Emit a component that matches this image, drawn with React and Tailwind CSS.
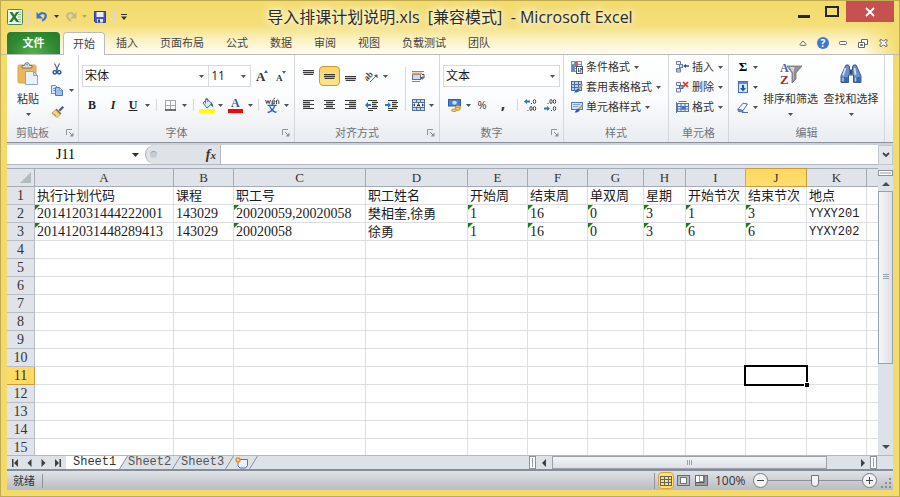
import React from "react";

const UI = "font-['Open_Sans','Noto_Sans_CJK_SC',sans-serif]";
const CELL = "font-['Liberation_Serif','Noto_Sans_CJK_SC',serif]";

/* ---------- small building blocks ---------- */

function Svg({ w = 14, h = 14, children, vb }) {
  return (
    <svg width={w} height={h} viewBox={vb || `0 0 ${w} ${h}`} className="block shrink-0 overflow-visible" aria-hidden="true">
      {children}
    </svg>
  );
}

function Caret({ className = "text-[#505050]" }) {
  return (
    <svg width="5" height="3" viewBox="0 0 5 3" className={`block shrink-0 ${className}`} aria-hidden="true">
      <path d="M0 0h5L2.5 3z" fill="currentColor" />
    </svg>
  );
}

function Btn({ label, className = "", children }) {
  return (
    <button type="button" aria-label={label} className={`flex shrink-0 items-center justify-center ${className}`}>
      {children}
    </button>
  );
}

function Sep({ className = "h-3 w-2" }) {
  return (
    <span className={`flex shrink-0 justify-center ${className}`}>
      <span className="h-full w-px bg-[#d4d7db]" />
    </span>
  );
}

function Group({ title, width, launcher, children }) {
  return (
    <section aria-label={title} className={`flex shrink-0 flex-col border-r border-[#d3d7dc] ${width}`}>
      <div className="flex h-[70px] items-start">{children}</div>
      <div className="flex h-[18px] items-center pr-1">
        <span className={`flex-1 text-center text-[#6d7480] ${launcher ? "pr-2" : "pl-1"}`}>{title}</span>
        {launcher && (
          <Btn label={`${title}选项`} className="h-2 w-2">
            <Svg w={8} h={8}>
              <path d="M.5 6V.5H6" fill="none" stroke="#8d949e" />
              <path d="M3 3l3 3" stroke="#7c838d" />
              <path d="M7.500 3.500v4h-4z" fill="#8d949e" />
            </Svg>
          </Btn>
        )}
      </div>
    </section>
  );
}

function Combo({ label, value, className }) {
  return (
    <label className={`flex h-[22px] items-center border border-[#d6dade] bg-white pr-1 ${className}`}>
      <select aria-label={label} defaultValue={value} className="h-full min-w-0 flex-1 appearance-none bg-transparent pl-[2px] text-[12px] text-[#1a1a1a] outline-none">
        <option>{value}</option>
      </select>
      <Caret />
    </label>
  );
}

/* ---------- icons ---------- */

const ExcelIcon = () => (
  <Svg w={16} h={16}>
    <rect x=".5" y=".5" width="15" height="15" rx="1" fill="#eef6ea" stroke="#4b8a4f" />
    <path d="M11 3h3M11 5.500h3M11 8h3M11 10.500h3M11 13h3" stroke="#8cb98d" />
    <path d="M2.500 3h3l1.700 3L9.300 3H12L8.600 8l3.700 5H9.200L7.100 9.900 4.900 13H2l3.700-5z" fill="#1f7d34" />
  </Svg>
);

const UndoIcon = ({ color }) => (
  <Svg w={12} h={11}>
    <path d="M3 4C5.500 1.200 9.800 1.800 9.800 5c0 2-1.300 3.300-3.600 4.800" fill="none" stroke={color} strokeWidth="2.200" />
    <path d="M.5.8v6.700h6.500z" fill={color} />
  </Svg>
);

const SaveIcon = () => (
  <Svg w={12} h={12}>
    <path d="M.5.5h11v11h-10l-1-1z" fill="#4d56c0" stroke="#303a92" />
    <rect x="2.500" y="1" width="7" height="5" fill="#e9edf8" />
    <rect x="3" y="8" width="6" height="3.500" fill="#dfe3ee" />
    <rect x="4" y="8.500" width="2" height="3" fill="#303a92" />
  </Svg>
);

const PasteIcon = () => (
  <Svg w={22} h={24}>
    <rect x="1" y="3" width="18" height="18" rx="1.500" fill="#eab55b" stroke="#dba549" />
    <path d="M5 6V3.500h2.500C7.500 1.500 8.500.8 10 .8s2.500.7 2.500 2.700H15V6z" fill="#dde1e6" stroke="#6d737c" />
    <circle cx="10" cy="2.800" r=".8" fill="#6d737c" />
    <path d="M8.500 9.500h8l4 4v9h-12z" fill="#eaf1fb" stroke="#93a5c2" />
    <path d="M16.500 9.500v4h4z" fill="#cfdcf0" stroke="#93a5c2" />
  </Svg>
);

const CutIcon = () => (
  <Svg w={10} h={12}>
    <path d="M2.500.5L6.200 8M7.500.5L3.800 8" stroke="#5b6f93" strokeWidth="1.300" />
    <circle cx="2.800" cy="9.300" r="1.700" fill="none" stroke="#2451a8" strokeWidth="1.400" />
    <circle cx="7.200" cy="9.300" r="1.700" fill="none" stroke="#2451a8" strokeWidth="1.400" />
  </Svg>
);

const CopyIcon = () => (
  <Svg w={12} h={11}>
    <path d="M.5.5h4l2 2v6h-6z" fill="#dce9fb" stroke="#6b90cc" />
    <path d="M2 3.500h3M2 5.500h3" stroke="#6b90cc" />
    <path d="M4.500 2.500h4l3 3v5h-7z" fill="#9dc0f0" stroke="#4a76bd" />
    <path d="M8.500 2.500v3h3z" fill="#e8f1fd" stroke="#4a76bd" strokeWidth=".6" />
  </Svg>
);

const BrushIcon = () => (
  <Svg w={13} h={12}>
    <path d="M12.300.8L8.300 4.800" stroke="#57508f" strokeWidth="2.200" />
    <path d="M5.500 2.500l5 5-1.500 1-4.700-4.500z" fill="#6d6d74" />
    <path d="M4.500 3.800l4.700 4.700L6 11.500.8 7.200z" fill="#f3d778" stroke="#a88a34" strokeWidth=".7" />
    <path d="M2.500 7.500L5 9.800" stroke="#a88a34" strokeWidth=".8" />
  </Svg>
);

const GrowFont = ({ small }) => (
  <Svg w={13} h={14}>
    <text x="0" y="12" fontFamily="Liberation Serif, serif" fontWeight="bold" fontSize={small ? 9 : 13} fill="#333">A</text>
    {small ? <path d="M6 2h4L8 5z" fill="#3561b8" /> : <path d="M8 4h4L10 1z" fill="#3561b8" />}
  </Svg>
);

const BorderIcon = () => (
  <Svg w={11} h={11}>
    <path d="M.5 0v10M5.500 0v10M10.500 0v10M0 .5h11M0 5.500h11" stroke="#a4a8ae" />
    <path d="M0 10h11" stroke="#444" strokeWidth="1.500" />
  </Svg>
);

const FillIcon = () => (
  <Svg w={16} h={14}>
    <path d="M4 5l4-4 5 4.500-5 4.500z" fill="#dce7f7" stroke="#4a6ea9" />
    <path d="M6.500 5.500V1.500c0-1.500 2.300-1.500 2.300 0V4" fill="none" stroke="#5d6c86" />
    <path d="M12 4.500c2 1 2.500 3 2 5-.6-1.300-1.300-2-2.500-2.500z" fill="#2c5dab" />
    <rect y="11" width="16" height="4" rx="1" fill="#ffff00" />
  </Svg>
);

const FontColorIcon = () => (
  <Svg w={15} h={14}>
    <text x="3" y="9" fontFamily="Liberation Serif, serif" fontWeight="bold" fontSize="12" fill="#3a5a97">A</text>
    <rect y="11" width="15" height="4" fill="#fb0007" />
  </Svg>
);

const PhoneticIcon = () => (
  <Svg w={14} h={14}>
    <path d="M.5 2l1.300 3.500L3 2.500l1.200 3L5.500 2M7 4h3c0-2.500-3-2.500-3 0 0 2 2.200 2 3 1.200M11.500 6V2.500c1.500-1 2.300-.3 2.300.8V6M8.500 1L10 0" fill="none" stroke="#444" />
    <text x="2" y="14" fontFamily="Noto Sans CJK SC, sans-serif" fontWeight="bold" fontSize="10" fill="#2f5fc0">文</text>
  </Svg>
);

const VAlign = ({ rows }) => (
  <Svg w={12} h={12}>
    {rows.map((y, i) => (
      <rect key={y} x={i === 2 ? 1 : 0} y={y} width={i === 2 ? 9 : 11} height="1" fill="#3b3b3b" />
    ))}
    <rect x="0" y={rows[0]} width="11" height="5" fill="#3b3b3b" opacity=".3" />
  </Svg>
);

const HAlign = ({ kind }) => {
  const x = { left: 0, center: 2, right: 4 }[kind];
  return (
    <Svg w={11} h={10}>
      {[0, 2, 4, 6, 8].map((y, i) => (
        <rect key={y} x={i % 2 ? x : 0} y={y} width={i % 2 ? 7 : 11} height="1" fill="#3b3b3b" />
      ))}
      <rect x={x} y="0" width="7" height="9" fill="#3b3b3b" opacity=".3" />
    </Svg>
  );
};

const OrientIcon = () => (
  <Svg w={13} h={13}>
    <text x="0" y="9" fontFamily="Liberation Serif, serif" fontWeight="bold" fontSize="9" fill="#444" transform="rotate(-45 4 8)">ab</text>
    <path d="M5 12l6-6" stroke="#666" />
    <path d="M12.500 4.500v3.800L8.900 5z" fill="#555" />
  </Svg>
);

const IndentIcon = ({ out }) => (
  <Svg w={13} h={11}>
    <path d="M3 .5h9M7 2.500h6M7 4.500h4M7 6.500h6M3 8.500h9M3 10.500h5" stroke="#3b3b3b" />
    <path d="M7 1h5v8H7z" fill="#3b3b3b" opacity=".25" />
    {out ? <path d="M0 5l3-3v2h3v2H3v2z" fill="#2f6fd0" /> : <path d="M6 5L3 2v2H0v2h3v2z" fill="#2f6fd0" />}
  </Svg>
);

const WrapIcon = () => (
  <Svg w={13} h={13}>
    <path d="M0 1.500h12M0 11.500h8" stroke="#7e8a9c" />
    <rect x=".5" y="4.500" width="8" height="5" fill="#cfdcf0" stroke="#5d7096" />
    <rect x="0" y="2.500" width="10" height="2" fill="#f0a26b" />
    <path d="M10 4.500h2v3.500h-2.500" fill="none" stroke="#444" />
    <path d="M10.500 6L8.500 8l2 2z" fill="#444" />
  </Svg>
);

const MergeIcon = () => (
  <Svg w={13} h={12}>
    <rect x=".5" y=".5" width="12" height="11" fill="#c3d6f2" stroke="#56709d" />
    <path d="M0 3.500h13M0 8.500h13M4.500 0v3M8.500 0v3M4.500 9v3M8.500 9v3" stroke="#56709d" />
    <rect x="1" y="4" width="11" height="4" fill="#f1f6fd" />
    <path d="M1 6l2-1.800v3.600zM12 6l-2-1.800v3.600z" fill="#2a3d63" />
    <path d="M5 7.500L6.500 4.500 8 7.500M5.500 6.500h2" fill="none" stroke="#222" strokeWidth=".9" />
  </Svg>
);

const MoneyIcon = () => (
  <Svg w={13} h={13}>
    <rect x=".5" y=".5" width="12" height="6.500" fill="#4c7fc9" stroke="#2f5ca4" />
    <ellipse cx="6.500" cy="3.800" rx="2.300" ry="2" fill="#c9dcf6" />
    <ellipse cx="10" cy="8" rx="2.800" ry="1.500" fill="#f4cf60" stroke="#b08420" strokeWidth=".7" />
    <ellipse cx="9.500" cy="10" rx="2.800" ry="1.500" fill="#f4cf60" stroke="#b08420" strokeWidth=".7" />
    <ellipse cx="6" cy="11.300" rx="2.800" ry="1.300" fill="#f4cf60" stroke="#b08420" strokeWidth=".7" />
  </Svg>
);

const Zero = ({ x, y }) => <ellipse cx={x} cy={y} rx="1.200" ry="2" fill="none" stroke="#444" strokeWidth="1" />;

const DecimalIcon = ({ more }) => {
  const one = more ? 2.500 : 9.500;
  const two = more ? 9.500 : 2.500;
  return (
    <Svg w={13} h={12}>
      <Zero x="10.500" y={one} />
      <rect x="7" y={one + 1.500} width="1" height="1" fill="#444" />
      <Zero x="7" y={two} />
      <Zero x="10.500" y={two} />
      <rect x="3.500" y={two + 1.500} width="1" height="1" fill="#444" />
      {more ? <path d="M0 2.500L3 0v1.500h3v2H3V5z" fill="#2f6fd0" /> : <path d="M6 9.500L3 7v1.500H0v2h3V12z" fill="#2f6fd0" />}
    </Svg>
  );
};

const CondIcon = () => (
  <Svg w={12} h={13}>
    <rect x=".5" y=".5" width="10" height="10" fill="#e4ecf8" stroke="#7d93b8" />
    <path d="M3.500 0v11M0 3.500h11M0 7.500h6" stroke="#7d93b8" />
    <rect x="4" y="1" width="3" height="5" fill="#e2574c" />
    <rect x="1" y="4" width="2" height="6" fill="#5585cf" />
    <rect x="5.500" y="5.500" width="6" height="7" fill="#fff" stroke="#4b5a74" />
    <path d="M7.500 7v4M9 7.500h1.500v1.500H9v2h1.500" fill="none" stroke="#333" strokeWidth=".8" />
  </Svg>
);

const TableFmtIcon = () => (
  <Svg w={12} h={12}>
    <rect x=".5" y=".5" width="10" height="9" fill="#b9d0f2" stroke="#4a6da8" />
    <path d="M0 3.500h11M0 6.500h11M3.500 0v10M7.500 0v10" stroke="#4a6da8" />
    <path d="M11.500 3.500l-5 5.500" stroke="#ce9a3b" strokeWidth="1.800" />
    <path d="M7.500 7.500c-2 .5-2.500 2-4.500 4 2.500.3 5-.5 5.800-2.500z" fill="#2f62b5" />
  </Svg>
);

const CellStyleIcon = () => (
  <Svg w={12} h={12}>
    <rect x=".5" y="1.500" width="11" height="7" fill="#cfe0f8" stroke="#4f7abf" />
    <path d="M2 3.500h7M2 5.500h5" stroke="#85a6da" />
    <path d="M11.500 4L7 9" stroke="#ce9a3b" strokeWidth="1.800" />
    <path d="M7.500 7.500c-2 .5-2.500 2-4 4 2.500.3 4.500-.5 5.300-2.500z" fill="#2f62b5" />
  </Svg>
);

const InsertIcon = () => (
  <Svg w={13} h={12}>
    <path d="M.5.500h4v3h-4zM.5 7.500h4v3.500h-4zM.5 9h4" fill="#e6eefa" stroke="#6c7d99" />
    <rect x="3.500" y="3.500" width="3" height="3" fill="#cfe0f8" stroke="#6c7d99" />
    <path d="M7 5l3-2v1.300h3v1.500h-3V7z" fill="#2c4f8f" />
  </Svg>
);

const DeleteIcon = () => (
  <Svg w={13} h={12}>
    <path d="M.5 1.500h4v3h-4zM.5 7.500h4v3.500h-4z" fill="#e6eefa" stroke="#6c7d99" />
    <rect x="3.500" y="4.500" width="3.500" height="3" fill="#8fb2e6" stroke="#4f6da0" />
    <path d="M7 1l5 5M12 1L7 6" stroke="#e8291c" strokeWidth="1.700" />
  </Svg>
);

const FormatIcon = () => (
  <Svg w={13} h={12}>
    <rect x="1.500" y="2.500" width="11" height="8" fill="#dce8f9" stroke="#5a77a8" />
    <path d="M1 5.500h12M1 8h12M5 2v9M9 2v9M2.500.5h8M.5 1v11" stroke="#5a77a8" />
    <rect x="5.500" y="5.500" width="4" height="3" fill="#3d74c9" />
  </Svg>
);

const FillDownIcon = () => (
  <Svg w={10} h={12}>
    <rect x=".5" y=".5" width="9" height="11" fill="#d9e7fb" stroke="#466fb4" />
    <rect x="1" y="1" width="8" height="2" fill="#5c8bd8" />
    <path d="M4 4h2v3h2L5 10.500 2 7h2z" fill="#1f55b5" />
  </Svg>
);

const EraserIcon = () => (
  <Svg w={12} h={11}>
    <path d="M.8 7.500L6 1.200 10.500 2 6 8.500z" fill="#f3f6fc" stroke="#5a6f98" />
    <path d="M.8 7.500L6 8.500v1.300L1.500 9.500z" fill="#8aa4d3" stroke="#5a6f98" />
    <path d="M5 10.500h6" stroke="#5a6f98" />
  </Svg>
);

const SortIcon = () => (
  <Svg w={22} h={22}>
    <text x="0" y="9" fontFamily="Liberation Serif, serif" fontWeight="bold" fontSize="12" fill="#3d68ad">A</text>
    <text x="0" y="21" fontFamily="Liberation Serif, serif" fontWeight="bold" fontSize="13" fill="#9a3434">Z</text>
    <path d="M7 3h15l-6 7v6l-4 4V10z" fill="#8f9296" stroke="#6f7276" strokeWidth=".8" />
    <path d="M9.500 4h5l-1 5.500v7l-.5.500V9.500z" fill="#d2d4d6" />
  </Svg>
);

const FindIcon = () => (
  <Svg w={22} h={20}>
    <path d="M5 3l1-2h2.500l1 2v3h3V3l1-2H16l1 2 4 9v6.500h-7.500V11h-5v7.500H1V12z" fill="#6c8fc9" stroke="#3a5990" />
    <path d="M5.500 4L3 11.500M14.500 4l1 7" stroke="#d0def5" strokeWidth="1.800" />
    <rect x="1.500" y="13" width="6.500" height="5" rx="1" fill="#3f66a8" />
    <rect x="14" y="13" width="6.500" height="5" rx="1" fill="#3f66a8" />
    <rect x="9.500" y="6" width="3" height="4" fill="#2f4d85" />
    <path d="M3 13.500v4M15.500 13.500v4" stroke="#b3caef" strokeWidth="1.500" />
  </Svg>
);

/* ---------- title bar and ribbon tabs ---------- */

function TitleBar() {
  return (
    <header className="relative flex h-[31px] shrink-0 items-start pl-[6px]">
      <div className="flex h-[31px] items-center">
        <span className="mr-[3px]"><ExcelIcon /></span>
        <Sep className="h-[14px] w-1" />
        <Btn label="撤消" className="ml-1 h-4 w-4"><UndoIcon color="#3c73cf" /></Btn>
        <Btn label="撤消列表" className="ml-[2px] h-4 w-2"><Caret className="text-[#333]" /></Btn>
        <Btn label="恢复" className="ml-[3px] h-4 w-4 -scale-x-100"><UndoIcon color="#c3b98e" /></Btn>
        <Btn label="恢复列表" className="ml-px h-4 w-2"><Caret className="text-[#b5a567]" /></Btn>
        <Btn label="保存" className="ml-1 h-4 w-4"><SaveIcon /></Btn>
        <Sep className="ml-1 h-[14px] w-1" />
        <Btn label="自定义快速访问工具栏" className="ml-1 h-4 w-2">
          <Svg w={6} h={6}><path d="M0 .5h6" stroke="#333" /><path d="M0 2.500h6L3 6z" fill="#333" /></Svg>
        </Btn>
      </div>
      <h1 className="pointer-events-none absolute inset-0 flex items-center justify-center">
        <span className="whitespace-pre text-[16px] leading-[28px] text-[#2b2b2b] [text-shadow:0_0_6px_#fffbe6,0_0_10px_#fffbe6,0_0_14px_#fffbe6]">导入排课计划说明.xls  [兼容模式]  - Microsoft Excel</span>
      </h1>
      <div className="ml-auto flex h-[21px] items-center pr-[5px]">
        <Btn label="最小化" className="h-full w-[28px] items-end pb-1"><span className="mt-2 h-[3px] w-3 bg-[#262626]" /></Btn>
        <Btn label="最大化" className="h-full w-[28px]"><span className="h-[11px] w-[14px] border-2 border-[#262626]" /></Btn>
        <Btn label="关闭" className="h-full w-[48px] bg-[#c75050]">
          <Svg w={10} h={10}><path d="M1 1l8 8M9 1L1 9" stroke="#fff" strokeWidth="1.800" /></Svg>
        </Btn>
      </div>
    </header>
  );
}

const TABS = ["插入", "页面布局", "公式", "数据", "审阅", "视图", "负载测试", "团队"];

function RibbonTabs() {
  return (
    <nav className="relative flex h-[23px] shrink-0 items-stretch border-b border-[#b9bdc2] px-[6px]">
      <button type="button" className="mr-[3px] w-[53px] rounded-t-sm bg-[radial-gradient(ellipse_at_bottom,#5cb04a,#2f8a33_60%,#237a2c)] font-bold text-white">文件</button>
      <button type="button" className="-mb-px w-[42px] rounded-t-sm border border-b-0 border-[#b9bdc2] bg-white text-[#444]">开始</button>
      {TABS.map((t) => (
        <button type="button" key={t} className="px-[11px] text-[#444]">{t}</button>
      ))}
      <div className="ml-auto flex items-center">
        <Btn label="折叠功能区" className="w-5"><Svg w={8} h={6}><path d="M.8 4.500L4 1l3.200 3.500-1 .8h-4.400z" fill="#fff" stroke="#555" strokeWidth=".9" /></Svg></Btn>
        <Btn label="帮助" className="w-5">
          <span className="flex h-3 w-3 items-center justify-center rounded-full bg-[#3f78cf] text-[10px] font-bold leading-3 text-white">?</span>
        </Btn>
        <Btn label="最小化工作簿" className="w-5"><Svg w={8} h={4}><rect x=".5" y=".5" width="7" height="3" rx="1" fill="#fff" stroke="#666" /></Svg></Btn>
        <Btn label="还原工作簿" className="w-5"><Svg w={10} h={9}><path d="M3.500.5h6v5h-6z" fill="#fff" stroke="#666" /><path d="M.5 3.500h6v5h-6z" fill="#fff" stroke="#666" /><path d="M2.500 5.500h2v1h-2z" stroke="#666" fill="none" /></Svg></Btn>
        <Btn label="关闭工作簿" className="w-5"><Svg w={9} h={8}><path d="M1 .8h2l1.500 1.500L6 .8h2v1.500L6.300 4 8 5.700v1.500H6L4.500 5.700 3 7.200H1V5.700L2.700 4 1 2.300z" fill="#fff" stroke="#555" strokeWidth=".9" /></Svg></Btn>
      </div>
    </nav>
  );
}

/* ---------- ribbon ---------- */

function ListBtn({ icon, text }) {
  return (
    <button type="button" className="flex h-5 items-center whitespace-nowrap text-[#333]">
      <span className="mr-[3px] flex w-[13px] justify-center">{icon}</span>
      {text}
      <span className="ml-1"><Caret /></span>
    </button>
  );
}

function BigBtn({ icon, text, className = "" }) {
  return (
    <button type="button" className={`flex shrink-0 flex-col items-center whitespace-nowrap text-[#333] ${className}`}>
      <span className="flex h-[26px] items-center">{icon}</span>
      <span className="mt-[2px] h-5 leading-5">{text}</span>
      <span className="mt-1"><Caret /></span>
    </button>
  );
}

function Drop({ label, width = "w-2" }) {
  return <Btn label={label} className={`h-5 ${width}`}><Caret /></Btn>;
}

function Ribbon() {
  return (
    <div className="flex h-[88px] shrink-0 overflow-hidden border-b border-[#8b9099] bg-[linear-gradient(#ffffff,#fbfcfd_50%,#e9ecf0)]">
      <Group title="剪贴板" width="w-[72px]" launcher>
        <BigBtn icon={<PasteIcon />} text="粘贴" className="w-[42px] pt-[6px]" />
        <div className="flex flex-col pt-1">
          <Btn label="剪切" className="h-5 w-4"><CutIcon /></Btn>
          <div className="flex items-center"><Btn label="复制" className="h-[22px] w-4"><CopyIcon /></Btn><Drop label="复制选项" width="w-3" /></div>
          <Btn label="格式刷" className="h-[22px] w-4"><BrushIcon /></Btn>
        </div>
      </Group>

      <Group title="字体" width="w-[216px]" launcher>
        <div className="flex w-full flex-col gap-2 px-[3px] pt-[10px]">
          <div className="flex items-center">
            <Combo label="字体" value="宋体" className="w-[128px]" />
            <Combo label="字号" value="11" className="-ml-px w-[43px]" />
            <Btn label="增大字号" className="h-5 w-[22px]"><GrowFont /></Btn>
            <Btn label="减小字号" className="h-5 w-[18px]"><GrowFont small /></Btn>
          </div>
          <div className="flex items-center font-['Liberation_Serif'] text-[12px] text-[#222]">
            <Btn label="加粗" className="h-5 w-5 font-bold">B</Btn>
            <Btn label="倾斜" className="h-5 w-[22px] font-bold italic">I</Btn>
            <Btn label="下划线" className="h-5 w-[18px] font-bold underline">U</Btn>
            <Drop label="下划线选项" width="w-[10px]" />
            <Sep />
            <Btn label="边框" className="h-5 w-5"><BorderIcon /></Btn>
            <Drop label="边框选项" />
            <Sep className="h-3 w-[10px]" />
            <Btn label="填充颜色" className="h-5 w-[18px]"><FillIcon /></Btn>
            <Drop label="填充颜色选项" />
            <Btn label="字体颜色" className="h-5 w-[22px]"><FontColorIcon /></Btn>
            <Drop label="字体颜色选项" />
            <Sep />
            <Btn label="拼音" className="h-5 w-5"><PhoneticIcon /></Btn>
            <Drop label="拼音选项" />
          </div>
        </div>
      </Group>

      <Group title="对齐方式" width="w-[145px]" launcher>
        <div className="flex flex-col gap-2 pl-[3px] pt-[10px]">
          <div className="flex h-[22px] items-center">
            <Btn label="顶端对齐" className="h-5 w-[21px]"><VAlign rows={[0, 2, 4]} /></Btn>
            <Btn label="垂直居中" className="h-5 w-[21px] rounded-sm border border-[#c99b3c] bg-[linear-gradient(#fbd46c,#fde68a)]"><VAlign rows={[4, 6, 8]} /></Btn>
            <Btn label="底端对齐" className="h-5 w-[21px]"><VAlign rows={[6, 8, 10]} /></Btn>
            <Btn label="方向" className="h-5 w-5"><OrientIcon /></Btn>
            <Drop label="方向选项" />
          </div>
          <div className="flex items-center">
            <Btn label="左对齐" className="h-5 w-[21px]"><HAlign kind="left" /></Btn>
            <Btn label="居中" className="h-5 w-[21px]"><HAlign kind="center" /></Btn>
            <Btn label="右对齐" className="h-5 w-[21px]"><HAlign kind="right" /></Btn>
            <Btn label="减少缩进量" className="h-5 w-5"><IndentIcon out /></Btn>
            <Btn label="增加缩进量" className="h-5 w-5"><IndentIcon /></Btn>
          </div>
        </div>
        <Sep className="mt-3 h-[44px] w-2" />
        <div className="flex flex-col gap-2 pt-[10px]">
          <div className="flex h-[22px] items-center"><Btn label="自动换行" className="h-5 w-[18px]"><WrapIcon /></Btn></div>
          <div className="flex items-center"><Btn label="合并后居中" className="h-5 w-[18px]"><MergeIcon /></Btn><Drop label="合并选项" /></div>
        </div>
      </Group>

      <Group title="数字" width="w-[124px]" launcher>
        <div className="flex w-full flex-col gap-2 pl-[3px] pt-[10px]">
          <Combo label="数字格式" value="文本" className="w-[117px]" />
          <div className="flex items-center text-[#333]">
            <Btn label="会计数字格式" className="h-5 w-[22px]"><MoneyIcon /></Btn>
            <Drop label="会计选项" width="w-[6px]" />
            <Btn label="百分比样式" className="h-5 w-[22px]">%</Btn>
            <Btn label="千位分隔样式" className="h-5 w-5 pb-1 text-[16px] font-bold">,</Btn>
            <Sep />
            <Btn label="增加小数位数" className="h-5 w-[18px]"><DecimalIcon more /></Btn>
            <Btn label="减少小数位数" className="h-5 w-[22px]"><DecimalIcon /></Btn>
          </div>
        </div>
      </Group>

      <Group title="样式" width="w-[105px]">
        <div className="flex flex-col pl-[6px] pt-[2px]">
          <ListBtn icon={<CondIcon />} text="条件格式" />
          <ListBtn icon={<TableFmtIcon />} text="套用表格格式" />
          <ListBtn icon={<CellStyleIcon />} text="单元格样式" />
        </div>
      </Group>

      <Group title="单元格" width="w-[60px]">
        <div className="flex flex-col pl-[7px] pt-[2px]">
          <ListBtn icon={<InsertIcon />} text="插入" />
          <ListBtn icon={<DeleteIcon />} text="删除" />
          <ListBtn icon={<FormatIcon />} text="格式" />
        </div>
      </Group>

      <Group title="编辑" width="w-[156px]">
        <div className="flex flex-col pl-[6px] pt-[2px]">
          <div className="flex"><Btn label="自动求和" className="h-5 w-4 font-['Liberation_Serif'] text-[13px] font-bold">Σ</Btn><Drop label="求和选项" width="w-[9px]" /></div>
          <div className="flex"><Btn label="填充" className="h-5 w-4"><FillDownIcon /></Btn><Drop label="填充选项" width="w-[9px]" /></div>
          <div className="flex"><Btn label="清除" className="h-5 w-4"><EraserIcon /></Btn><Drop label="清除选项" width="w-[9px]" /></div>
        </div>
        <BigBtn icon={<SortIcon />} text="排序和筛选" className="w-[61px] pt-[6px]" />
        <BigBtn icon={<FindIcon />} text="查找和选择" className="w-[60px] pt-[6px]" />
      </Group>
    </div>
  );
}

/* ---------- formula bar ---------- */

function FormulaBar() {
  return (
    <div className={`flex h-[25px] shrink-0 border-y-2 border-b-[3px] border-b-[#dfe3e9] border-t-[#cdd1d8] bg-white ${CELL}`}>
      <div className="flex w-[138px] items-center border-b border-[#b4b9c1] pr-[6px]">
        <input aria-label="名称框" defaultValue="J11" className="min-w-0 flex-1 bg-transparent pr-2 text-center text-[14px] outline-none" />
        <svg width="7" height="4" viewBox="0 0 7 4" aria-hidden="true"><path d="M0 0h7L3.500 4z" fill="#333" /></svg>
      </div>
      <div className="w-[76px] border-b border-r border-[#b4b9c1]">
        <div className="flex h-full items-center justify-between rounded-l-full border-l border-[#a9aeb7] bg-[#dfe2e7] pl-1 pr-1">
          <span className="h-[7px] w-[7px] rounded-full border-t border-[#9da2aa] bg-[#c8ccd2]" />
          <button type="button" aria-label="插入函数" className="font-['Liberation_Serif'] text-[14px] font-bold italic leading-4 text-[#333]">f<span className="text-[11px]">x</span></button>
        </div>
      </div>
      <input aria-label="编辑栏" className="min-w-0 flex-1 border-b border-[#b4b9c1] bg-white px-1 text-[13px] outline-none" />
      <Btn label="展开编辑栏" className="w-[15px] border border-[#c2c7ce] bg-[#e4e7ec]">
        <Svg w={8} h={6}><path d="M1 1l3 3 3-3" fill="none" stroke="#444" strokeWidth="1.800" /></Svg>
      </Btn>
    </div>
  );
}

/* ---------- worksheet ---------- */

const COLS = ["A", "B", "C", "D", "E", "F", "G", "H", "I", "J", "K"];
const ROWS = [
  ["执行计划代码", "课程", "职工号", "职工姓名", "开始周", "结束周", "单双周", "星期", "开始节次", "结束节次", "地点"],
  ["201412031444222001", "143029", "20020059,20020058", "樊相奎,徐勇", "1", "16", "0", "3", "1", "3", "YYXY201"],
  ["201412031448289413", "143029", "20020058", "徐勇", "1", "16", "0", "3", "6", "6", "YYXY202"],
];
const TEXT_NUMBERS = new Set(["A", "C", "E", "F", "G", "H", "I", "J"]);
const ROW_COUNT = 15;

function Cell({ row, col, value }) {
  const marked = value && row > 1 && TEXT_NUMBERS.has(col);
  const selected = row === 11 && col === "J";
  return (
    <td className="relative h-[18px] border-b border-r border-[#dcdee1] p-0">
      {marked && <span className="absolute left-0 top-0 h-[5px] w-[5px] bg-[#138013] [clip-path:polygon(0_0,100%_0,0_100%)]" />}
      {value && (
        <div className={`h-[17px] whitespace-nowrap pl-[2px] leading-[18px] text-[#1c1c1c] ${col === "K" && row > 1 ? "font-['Liberation_Mono'] text-[12px]" : row === 1 || col === "D" ? "text-[13px]" : "text-[14px]"}`}>{value}</div>
      )}
      {selected && (
        <span className="absolute -bottom-[2px] -left-[2px] -right-[2px] -top-[2px] z-10 border-2 border-black">
          <span className="absolute -bottom-[3px] -right-[3px] h-[5px] w-[5px] border-l border-t border-white bg-black" />
        </span>
      )}
    </td>
  );
}

function Sheet() {
  return (
    <div className={`min-w-0 flex-1 overflow-hidden bg-white ${CELL}`}>
      <table className="w-full table-fixed border-separate border-spacing-0">
        <colgroup>
          <col className="w-[28px]" />
          <col className="w-[139px]" />
          <col className="w-[60px]" />
          <col className="w-[132px]" />
          <col className="w-[102px]" />
          <col className="w-[60px]" />
          <col className="w-[60px]" />
          <col className="w-[56px]" />
          <col className="w-[42px]" />
          <col className="w-[60px]" />
          <col className="w-[61px]" />
          <col className="w-[60px]" />
          <col />
        </colgroup>
        <thead>
          <tr className="h-[19px]">
            <th aria-label="全选" className="h-[19px] border-b border-r border-t border-[#a5abb4] bg-[#e0e3e9] p-0">
              <span className="flex justify-end pr-[3px]"><Svg w={11} h={11}><path d="M11 0v11H0z" fill="#b5b9c0" /></Svg></span>
            </th>
            {COLS.map((c) => (
              <th key={c} scope="col" className={`h-[19px] border-b border-r border-t p-0 text-[13px] font-normal leading-4 text-[#333] ${c === "J" ? "border-[#c99b3c] bg-[linear-gradient(#ffd85f,#ffdf6e)]" : "border-[#a5abb4] bg-[#e0e3e9]"}`}>{c}</th>
            ))}
            <th aria-label="L" className="h-[19px] border-b border-t border-[#a5abb4] bg-[#e0e3e9] p-0" />
          </tr>
        </thead>
        <tbody>
          {Array.from({ length: ROW_COUNT }, (_, i) => i + 1).map((r) => (
            <tr key={r} className="h-[18px]">
              <th scope="row" className={`h-[18px] border-b border-r p-0 text-[14px] font-normal leading-[17px] text-[#333] ${r === 11 ? "border-[#c99b3c] bg-[#ffdb64]" : "border-[#b9bec6] bg-[#e0e3e9]"}`}>{r}</th>
              {COLS.map((c, ci) => (
                <Cell key={c} row={r} col={c} value={ROWS[r - 1]?.[ci]} />
              ))}
              <td className="h-[18px] border-b border-[#dcdee1] p-0" />
            </tr>
          ))}
        </tbody>
      </table>
    </div>
  );
}

function VerticalScroll() {
  return (
    <div className="flex w-[15px] shrink-0 flex-col bg-[#dde1e8]">
      <div className="mt-[2px] h-[6px] border border-[#8c929c] bg-white p-px"><div className="h-full bg-[#c9cdd4]" /></div>
      <Btn label="向上滚动" className="h-[15px]"><Svg w={8} h={4}><path d="M0 4h8L4 0z" fill="#4a4a4a" /></Svg></Btn>
      <div className="flex flex-1 flex-col">
        <div className="flex flex-[173] flex-col items-center justify-center border border-[#9aa1ab] bg-[linear-gradient(to_right,#f6f7f9,#dcdfe5)]">
          <Svg w={6} h={6}><path d="M0 .5h6M0 2.500h6M0 4.500h6" stroke="#9ba1aa" /></Svg>
        </div>
        <div className="flex-[75]" />
      </div>
      <Btn label="向下滚动" className="h-[17px]"><Svg w={8} h={4}><path d="M0 0h8L4 4z" fill="#4a4a4a" /></Svg></Btn>
    </div>
  );
}

/* ---------- sheet tabs and status bar ---------- */

function Slash({ left = "none" }) {
  return (
    <svg width="10" height="13" viewBox="0 0 10 13" className="block shrink-0" aria-hidden="true">
      <path d="M0 0h9L1 13H0z" fill={left} />
      <path d="M9.500 0l-8 13" stroke="#8b919b" />
    </svg>
  );
}

function NavArrow({ label, d }) {
  return <Btn label={label} className="w-[14px]"><Svg w={7} h={8}><path d={d} fill="#3f3f3f" /></Svg></Btn>;
}

function SheetTabs() {
  return (
    <div className="flex h-4 shrink-0 items-stretch border-b-2 border-t border-b-[#858d99] border-t-[#b4b9c1] bg-[#dde1e8]">
      <div className="flex w-[59px] pl-[1px]">
        <NavArrow label="第一张" d="M0 0h1.500v8H0zM6 0v8L2 4z" />
        <NavArrow label="上一张" d="M5.500 0v8L1.500 4z" />
        <NavArrow label="下一张" d="M1.500 0v8l4-4z" />
        <NavArrow label="最后一张" d="M5.500 0H7v8H5.500zM1 0v8l4-4z" />
      </div>
      <div className="flex font-['Liberation_Mono'] text-[12px] leading-[13px] text-[#555]">
        <button type="button" className="w-[52px] bg-white pl-[7px] text-left text-[#333]">Sheet1</button>
        <Slash left="#fff" />
        <button type="button" className="w-[43px] text-left">Sheet2</button>
        <Slash />
        <button type="button" className="w-[43px] text-left">Sheet3</button>
        <Slash />
        <Btn label="插入工作表" className="w-[14px]">
          <Svg w={13} h={12}>
            <path d="M3 2.500h9.500v6l-2 2.500H5L3 9z" fill="#eaf1fc" stroke="#5176b5" />
            <circle cx="3" cy="3" r="2" fill="#ffd98a" stroke="#ee8b1f" strokeWidth="1.400" />
          </Svg>
        </Btn>
        <Slash />
      </div>
      <div className="flex-1" />
      <div className="flex w-[364px] max-w-[50%] items-stretch">
        <span className="w-[7px] border border-[#8c929c] bg-white p-px"><span className="mx-auto block h-full w-px bg-[#9ba1aa]" /></span>
        <Btn label="向左滚动" className="w-4"><Svg w={4} h={8}><path d="M4 0v8L0 4z" fill="#3f3f3f" /></Svg></Btn>
        <div className="flex flex-1">
          <div className="flex flex-[275] items-center justify-center border border-[#9aa1ab] bg-[linear-gradient(#f2f4f7,#dcdfe5)]">
            <Svg w={6} h={5}><path d="M.5 0v5M2.500 0v5M4.500 0v5" stroke="#9ba1aa" /></Svg>
          </div>
          <div className="flex-[29]" />
        </div>
        <Btn label="向右滚动" className="w-[14px]"><Svg w={4} h={8}><path d="M0 0v8l4-4z" fill="#3f3f3f" /></Svg></Btn>
        <span className="w-[7px] border border-[#8c929c] bg-white p-px"><span className="mx-auto block h-full w-px bg-[#9ba1aa]" /></span>
        <span className="w-4" />
      </div>
    </div>
  );
}

function StatusBar() {
  return (
    <footer className="flex h-[19px] shrink-0 items-center bg-[linear-gradient(#dfe2e7,#b8bcc3)] text-[#333]">
      <span className="w-[35px] pl-[6px]">就绪</span>
      <span className="h-[14px] w-px bg-[#8f949d]" />
      <div className="flex-1" />
      <span className="mr-[3px] h-4 w-px bg-[#8f949d]" />
      <Btn label="普通" className="h-[17px] w-4 rounded-sm border border-[#d9a33a] bg-[#ffe17c]">
        <Svg w={12} h={10}><path d="M0 .5h12M0 3.500h12M0 6.500h12M0 9.500h12M.5 0v10M4.500 0v10M8.500 0v10M11.500 0v10" stroke="#66635a" /></Svg>
      </Btn>
      <Btn label="页面布局" className="h-[17px] w-[18px]">
        <Svg w={13} h={11}><rect x=".5" y=".5" width="12" height="10" fill="#b7bbc2" stroke="#666c76" /><rect x="3.500" y="2.500" width="6" height="6" fill="#fff" stroke="#777" /></Svg>
      </Btn>
      <Btn label="分页预览" className="h-[17px] w-[18px]">
        <Svg w={13} h={11}><rect x=".5" y=".5" width="12" height="10" fill="#999ea6" stroke="#666c76" /><path d="M1 1h3v6H1zM5 1h3v5H5z" fill="#fff" /><path d="M1 7.500h8V1" fill="none" stroke="#555" /></Svg>
      </Btn>
      <span className="ml-[5px] w-[38px] text-[12px]">100%</span>
      <Btn label="缩小" className="h-[15px] w-[15px] rounded-full border border-[#777c85] bg-[#f2f3f5]"><span className="h-px w-[7px] bg-[#444]" /></Btn>
      <input
        type="range"
        aria-label="显示比例"
        defaultValue="50"
        className="h-4 w-[94px] appearance-none bg-[linear-gradient(#8a8f98,#8a8f98)] bg-[length:100%_1px] bg-center bg-no-repeat [&::-webkit-slider-thumb]:h-3 [&::-webkit-slider-thumb]:w-2 [&::-webkit-slider-thumb]:appearance-none [&::-webkit-slider-thumb]:rounded-b-full [&::-webkit-slider-thumb]:border [&::-webkit-slider-thumb]:border-[#6f747d] [&::-webkit-slider-thumb]:bg-[#f2f3f5]"
      />
      <Btn label="放大" className="h-[15px] w-[15px] rounded-full border border-[#777c85] bg-[#f2f3f5]">
        <Svg w={7} h={7}><path d="M0 3.500h7M3.500 0v7" stroke="#444" /></Svg>
      </Btn>
      <span className="ml-1 mr-px self-end pb-[2px]">
        <Svg w={11} h={10}><path d="M8 8h2v2H8zM8 4h2v2H8zM8 0h2v2H8zM4 8h2v2H4zM4 4h2v2H4zM0 8h2v2H0z" fill="#878c95" /></Svg>
      </span>
    </footer>
  );
}

export default function App() {
  return (
    <div className={`flex h-screen flex-col overflow-hidden border border-[#c0aa52] bg-[#f3db6b] pb-[6px] text-[11px] leading-4 ${UI}`}>
      <div className="shrink-0 bg-[linear-gradient(to_right,#f3db6b,#f3db6b00_3%,#f3db6b00_96%,#f3db6b),linear-gradient(#f3db6b,#f4de78_45%,#fbf1c0_70%,#fffdf4)]">
        <TitleBar />
        <RibbonTabs />
      </div>
      <main className="mx-[6px] flex min-h-0 flex-1 flex-col bg-white">
        <Ribbon />
        <FormulaBar />
        <div className="flex min-h-0 flex-1">
          <Sheet />
          <VerticalScroll />
        </div>
        <SheetTabs />
        <StatusBar />
      </main>
    </div>
  );
}
